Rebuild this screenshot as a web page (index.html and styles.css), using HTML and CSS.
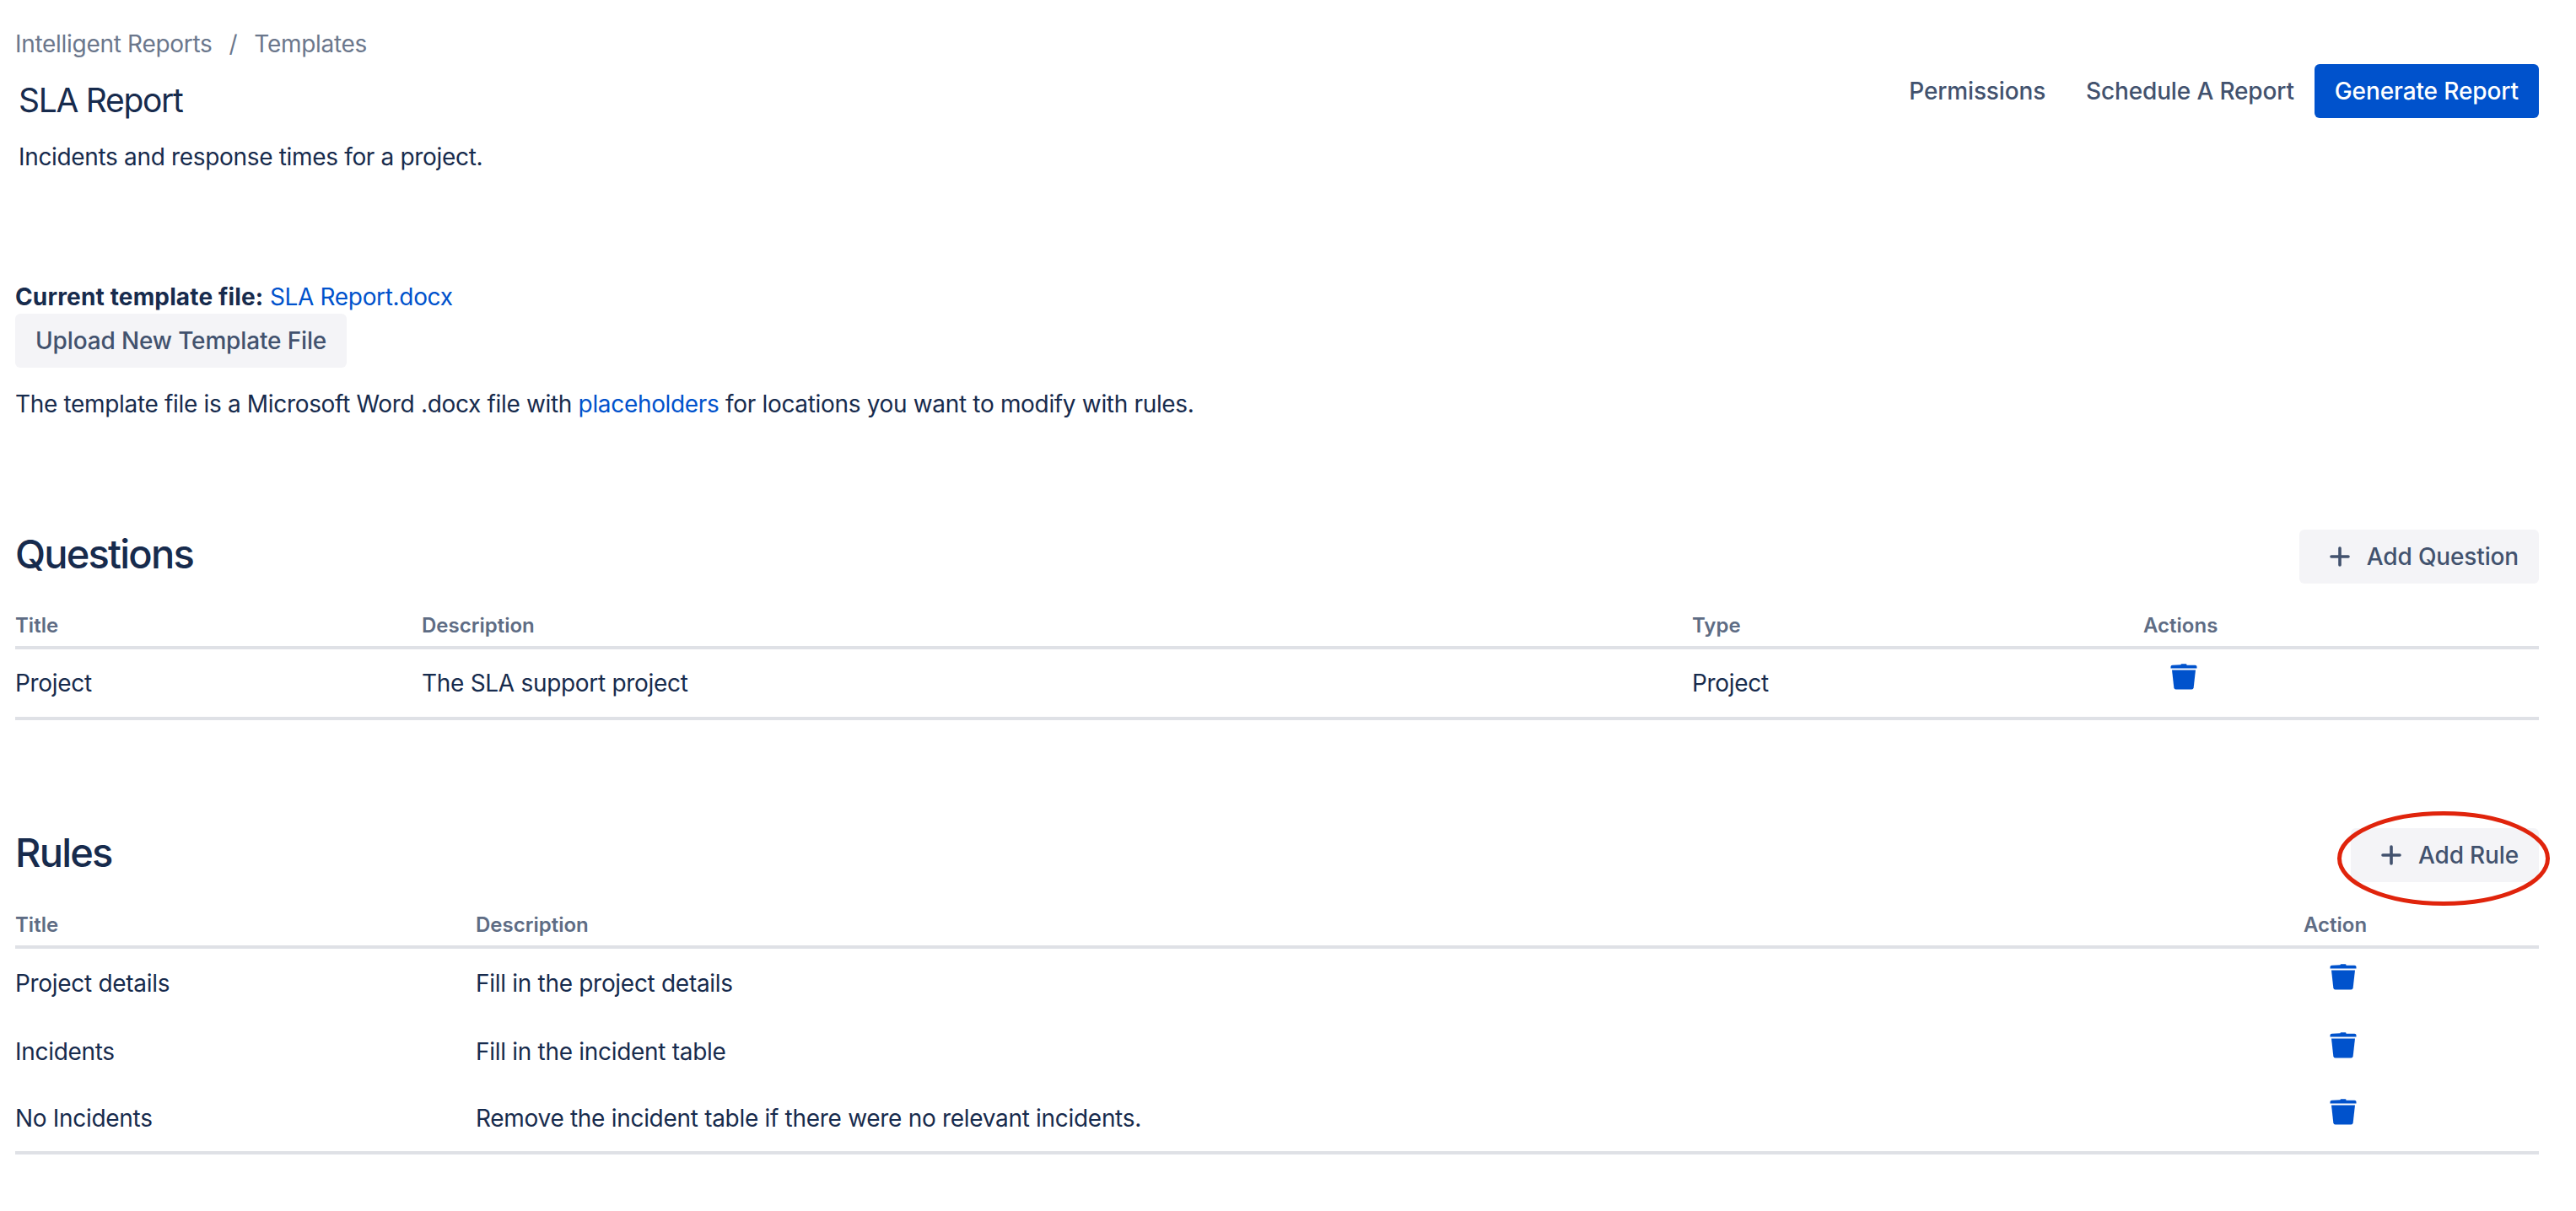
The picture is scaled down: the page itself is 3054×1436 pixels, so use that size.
FILE: index.html
```html
<!DOCTYPE html>
<html lang="en">
<head>
<meta charset="utf-8">
<title>SLA Report</title>
<link rel="stylesheet" href="styles.css">
</head>
<body>
<main class="page">
  <nav class="crumbs"><span>Intelligent Reports</span><span class="sep">/</span><span>Templates</span></nav>
  <header class="head">
    <div class="head-text">
      <h1 class="title">SLA Report</h1>
      <p class="desc">Incidents and response times for a project.</p>
    </div>
    <div class="head-actions">
      <button class="btn btn-subtle">Permissions</button>
      <button class="btn btn-subtle">Schedule A Report</button>
      <button class="btn btn-primary">Generate Report</button>
    </div>
  </header>

  <section class="template">
    <div class="current"><strong>Current template file:</strong> <a class="link" href="#">SLA Report.docx</a></div>
    <button class="btn btn-default">Upload New Template File</button>
    <p class="note">The template file is a Microsoft Word .docx file with <a class="link" href="#">placeholders</a> for locations you want to modify with rules.</p>
  </section>

  <section class="block block-q">
    <div class="block-head">
      <h2 class="h2">Questions</h2>
      <button class="btn btn-default btn-icon"><svg class="plus" viewBox="0 0 24 24"><path d="M12 2v20M2 12h20"/></svg>Add Question</button>
    </div>
    <table class="tbl tbl-q">
      <thead><tr><th class="c1">Title</th><th class="c2">Description</th><th class="c3">Type</th><th class="c4">Actions</th></tr></thead>
      <tbody>
        <tr><td>Project</td><td>The SLA support project</td><td>Project</td><td><svg class="trash trash-q" viewBox="0 0 32 32"><use href="#bin"/></svg></td></tr>
      </tbody>
    </table>
  </section>

  <section class="block block-r">
    <div class="block-head">
      <h2 class="h2">Rules</h2>
      <button class="btn btn-default btn-icon"><svg class="plus" viewBox="0 0 24 24"><path d="M12 2v20M2 12h20"/></svg>Add Rule</button>
      <svg class="ring" viewBox="0 0 256 120"><ellipse cx="128" cy="60" rx="123.500" ry="53.500"/></svg>
    </div>
    <table class="tbl tbl-r">
      <thead><tr><th class="r1">Title</th><th class="r2">Description</th><th class="r3">Action</th></tr></thead>
      <tbody>
        <tr><td>Project details</td><td>Fill in the project details</td><td><svg class="trash trash-r" viewBox="0 0 32 32"><use href="#bin"/></svg></td></tr>
        <tr><td>Incidents</td><td>Fill in the incident table</td><td><svg class="trash trash-r" viewBox="0 0 32 32"><use href="#bin"/></svg></td></tr>
        <tr><td>No Incidents</td><td>Remove the incident table if there were no relevant incidents.</td><td><svg class="trash trash-r" viewBox="0 0 32 32"><use href="#bin"/></svg></td></tr>
      </tbody>
    </table>
  </section>
</main>
<svg class="defs" width="0" height="0"><defs><g id="bin"><path d="M12.500 2.200q0-1 1-1h5q1 0 1 1v.6h10q2 0 2 1.600v2.200H0.500V4.400q0-1.600 2-1.600z"/><path d="M2 8.600h28l-2.300 20.600q-.3 2.300-2.300 2.300H6.600q-2 0-2.300-2.300z"/></g></defs></svg>
</body>
</html>
```
FILE: styles.css
```css
* { box-sizing: border-box; }
html, body { margin: 0; background: #fff; }
body { font-family: Inter, "Liberation Sans", sans-serif; font-size: 28px; line-height: 40px; color: #172b4d; letter-spacing: -0.33px; }
.page { padding: 32px 44px 0 18px; }
.crumbs { display: flex; gap: 20px; height: 40px; color: #6b778c; letter-spacing: -0.3px; }
.head { display: flex; justify-content: space-between; align-items: flex-start; }
.head-text { padding: 23px 0 0 4px; }
.title { margin: 0; font-size: 39px; line-height: 48px; font-weight: 400; letter-spacing: -1.3px; }
.desc { margin: 23px 0 0; }
.head-actions { display: flex; gap: 0; margin-top: 4px; }
.btn { font: inherit; font-weight: 500; height: 64px; line-height: 64px; padding: 0 24px; border: 0; border-radius: 6px; white-space: nowrap; letter-spacing: -0.15px; }
.btn-subtle { background: transparent; color: #42526e; }
.btn-primary { background: #0052cc; color: #fff; letter-spacing: -0.1px; }
.btn-default { background: #f4f4f7; color: #42526e; display: block; }
.btn-icon { display: flex; align-items: center; gap: 20px; padding: 0 24px 0 36px; }
.plus { width: 24px; height: 24px; fill: none; stroke: #42526e; stroke-width: 3.600; stroke-linecap: round; }
.template { margin-top: 126px; }
.current { height: 40px; }
.current strong { font-weight: 700; letter-spacing: 0.15px; }
.link { color: #0052cc; text-decoration: none; }
.note { margin: 23px 0 0; }
.block-q { margin-top: 129px; }
.block-r { margin-top: 128px; }
.block-head { position: relative; display: flex; justify-content: space-between; align-items: center; height: 64px; }
.h2 { margin: 0 0 7px; font-size: 47px; line-height: 56px; font-weight: 500; letter-spacing: -1.8px; }
.ring { position: absolute; right: -15px; top: -24px; width: 256px; height: 120px; fill: none; stroke: #e0240c; stroke-width: 5; overflow: visible; }
.tbl { width: 100%; border-collapse: collapse; table-layout: fixed; }
.tbl-q { margin-top: 34px; }
.tbl-r { margin-top: 35px; }
.tbl th { text-align: left; font-size: 24px; line-height: 32px; font-weight: 600; color: #5e6c84; padding: 0 0 8px; border-bottom: 4px solid #dfe1e6; letter-spacing: 0; }
.tbl td { padding: 0; height: 80px; vertical-align: middle; letter-spacing: -0.3px; }
.tbl tbody { border-bottom: 4px solid #dfe1e6; }
.c1 { width: 482px; }
.c2 { width: 1506px; }
.c3 { width: 535px; }
.r1 { width: 546px; }
.r3 { width: 279px; }
.tbl-q td { height: 84px; }
.tbl-r tbody tr:first-child td { height: 84px; }
.trash { display: block; width: 32px; height: 32px; fill: #0052cc; position: relative; top: -8px; }
.trash-q { margin-left: 32px; }
.trash-r { margin-left: 31px; }
.defs { position: absolute; }
```
